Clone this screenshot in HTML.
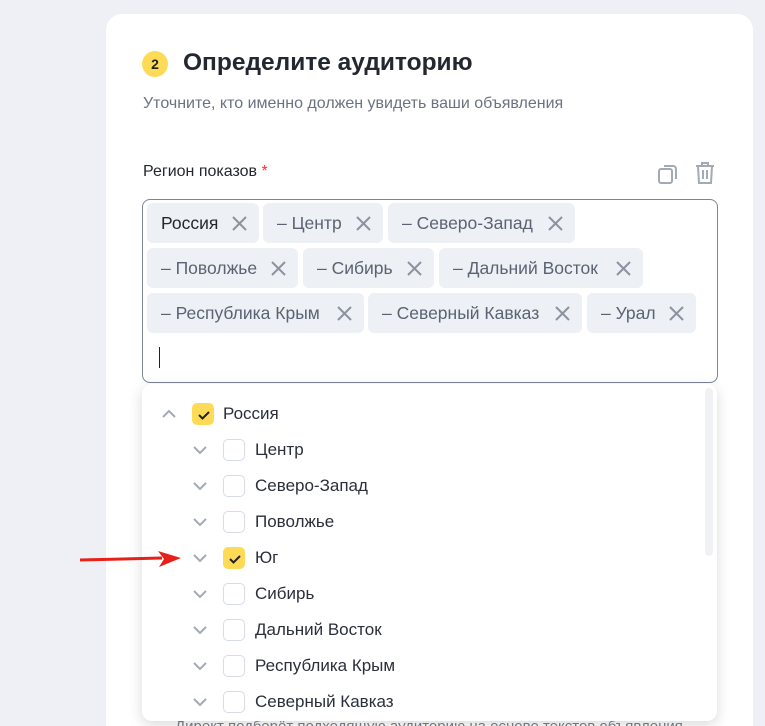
<!DOCTYPE html><html><head><meta charset="utf-8"><style>
html,body{margin:0;width:765px;height:726px;overflow:hidden}
body{background:#eef0f5;font-family:"Liberation Sans",sans-serif;position:relative}
.card{position:absolute;left:106px;top:14px;width:647px;height:740px;background:#fff;border-radius:16px}
.a{position:absolute;white-space:nowrap}
.chip{position:absolute;height:40px;background:#edf0f4;border-radius:6px;font-size:17.5px;color:#5b6373;line-height:40px;padding-left:14px;box-sizing:border-box}
.chip svg{position:absolute;right:12px;top:13px}
.box{position:absolute;left:142px;top:199px;width:576px;height:184px;border:1px solid #7c8596;border-radius:8px;box-sizing:border-box}
.dd{position:absolute;left:142px;top:384px;width:575px;height:337px;background:#fff;border-radius:10px;box-shadow:0 4px 14px rgba(0,0,0,.15);overflow:hidden}
.row{position:absolute;font-size:17px;color:#2a2f3a;height:36px;line-height:36px}
.cb{position:absolute;width:22px;height:22px;border:1px solid #d8dce3;border-radius:5px;box-sizing:border-box;top:7px}
.cb.on{background:#fddb56;border-color:#fddb56}
.cb svg{position:absolute;left:0;top:0}
</style></head><body>
<div class="card"></div>
<div class="a" style="left:142px;top:51px;width:26px;height:26px;border-radius:50%;background:#fddb56;font-size:14px;text-align:center;line-height:26px;color:#222;font-weight:bold">2</div>
<div class="a" style="left:183px;top:49px;font-size:24.5px;color:#23272f;font-weight:bold">Определите аудиторию</div>
<div class="a" style="left:143px;top:95px;font-size:16px;color:#6b7280">Уточните, кто именно должен увидеть ваши объявления</div>
<div class="a" style="left:143px;top:163px;font-size:16px;color:#23272f">Регион показов <span style="color:#f33">*</span></div>
<svg class="a" style="left:656px;top:162px" width="24" height="24" viewBox="0 0 24 24" fill="none" stroke="#a3aab5" stroke-width="2"><rect x="3" y="7" width="13" height="14" rx="2"/><path d="M8 4h9a3 3 0 0 1 3 3v10"/></svg>
<svg class="a" style="left:693px;top:160px" width="24" height="26" viewBox="0 0 24 26" fill="none" stroke="#a3aab5" stroke-width="2"><path d="M3 6h18M9 6V3h6v3M5 6l1 17h12l1-17M10 10v9M14 10v9"/></svg>
<div class="box"></div>
<div class="chip" style="left:147px;top:203px;width:112px;color:#23272f">Россия<svg width="15" height="15" viewBox="0 0 15 15" stroke="#8c93a0" stroke-width="2"><path d="M1 1l13 13M14 1L1 14"/></svg></div>
<div class="chip" style="left:263px;top:203px;width:120px">– Центр<svg width="15" height="15" viewBox="0 0 15 15" stroke="#8c93a0" stroke-width="2"><path d="M1 1l13 13M14 1L1 14"/></svg></div>
<div class="chip" style="left:388px;top:203px;width:187px">– Северо-Запад<svg width="15" height="15" viewBox="0 0 15 15" stroke="#8c93a0" stroke-width="2"><path d="M1 1l13 13M14 1L1 14"/></svg></div>
<div class="chip" style="left:147px;top:248px;width:151px">– Поволжье<svg width="15" height="15" viewBox="0 0 15 15" stroke="#8c93a0" stroke-width="2"><path d="M1 1l13 13M14 1L1 14"/></svg></div>
<div class="chip" style="left:303px;top:248px;width:131px">– Сибирь<svg width="15" height="15" viewBox="0 0 15 15" stroke="#8c93a0" stroke-width="2"><path d="M1 1l13 13M14 1L1 14"/></svg></div>
<div class="chip" style="left:439px;top:248px;width:204px">– Дальний Восток<svg width="15" height="15" viewBox="0 0 15 15" stroke="#8c93a0" stroke-width="2"><path d="M1 1l13 13M14 1L1 14"/></svg></div>
<div class="chip" style="left:147px;top:293px;width:217px">– Республика Крым<svg width="15" height="15" viewBox="0 0 15 15" stroke="#8c93a0" stroke-width="2"><path d="M1 1l13 13M14 1L1 14"/></svg></div>
<div class="chip" style="left:368px;top:293px;width:214px">– Северный Кавказ<svg width="15" height="15" viewBox="0 0 15 15" stroke="#8c93a0" stroke-width="2"><path d="M1 1l13 13M14 1L1 14"/></svg></div>
<div class="chip" style="left:587px;top:293px;width:109px">– Урал<svg width="15" height="15" viewBox="0 0 15 15" stroke="#8c93a0" stroke-width="2"><path d="M1 1l13 13M14 1L1 14"/></svg></div>
<div class="a" style="left:159px;top:347px;width:1px;height:21px;background:#222"></div>
<div class="a" style="left:175px;top:718px;font-size:15px;color:#7a808c">Директ подберёт подходящую аудиторию на основе текстов объявления</div>
<div class="dd">
<div class="a" style="left:563px;top:4px;width:8px;height:168px;background:#f0f1f4;border-radius:4px"></div>
<div class="row" style="left:0;top:12px;width:300px">
<svg class="a" style="left:19px;top:12px" width="16" height="10" viewBox="0 0 16 10" fill="none" stroke="#a3aab5" stroke-width="2"><path d="M2 9l6-6 6 6"/></svg>
<div class="cb on" style="left:50px"><svg width="22" height="22" viewBox="0 0 22 22" fill="none" stroke="#222" stroke-width="2"><path d="M6 11l3.5 3.5L16 8"/></svg></div>
<span class="a" style="left:81px">Россия</span></div>
<div class="row" style="left:0;top:48px;width:400px"><svg class="a" style="left:50px;top:13px" width="16" height="10" viewBox="0 0 16 10" fill="none" stroke="#a3aab5" stroke-width="2"><path d="M2 2l6 6 6-6"/></svg><div class="cb" style="left:81px"></div><span class="a" style="left:113px">Центр</span></div>
<div class="row" style="left:0;top:84px;width:400px"><svg class="a" style="left:50px;top:13px" width="16" height="10" viewBox="0 0 16 10" fill="none" stroke="#a3aab5" stroke-width="2"><path d="M2 2l6 6 6-6"/></svg><div class="cb" style="left:81px"></div><span class="a" style="left:113px">Северо-Запад</span></div>
<div class="row" style="left:0;top:120px;width:400px"><svg class="a" style="left:50px;top:13px" width="16" height="10" viewBox="0 0 16 10" fill="none" stroke="#a3aab5" stroke-width="2"><path d="M2 2l6 6 6-6"/></svg><div class="cb" style="left:81px"></div><span class="a" style="left:113px">Поволжье</span></div>
<div class="row" style="left:0;top:156px;width:400px"><svg class="a" style="left:50px;top:13px" width="16" height="10" viewBox="0 0 16 10" fill="none" stroke="#a3aab5" stroke-width="2"><path d="M2 2l6 6 6-6"/></svg><div class="cb on" style="left:81px"><svg width="22" height="22" viewBox="0 0 22 22" fill="none" stroke="#222" stroke-width="2"><path d="M6 11l3.5 3.5L16 8"/></svg></div><span class="a" style="left:113px">Юг</span></div>
<div class="row" style="left:0;top:192px;width:400px"><svg class="a" style="left:50px;top:13px" width="16" height="10" viewBox="0 0 16 10" fill="none" stroke="#a3aab5" stroke-width="2"><path d="M2 2l6 6 6-6"/></svg><div class="cb" style="left:81px"></div><span class="a" style="left:113px">Сибирь</span></div>
<div class="row" style="left:0;top:228px;width:400px"><svg class="a" style="left:50px;top:13px" width="16" height="10" viewBox="0 0 16 10" fill="none" stroke="#a3aab5" stroke-width="2"><path d="M2 2l6 6 6-6"/></svg><div class="cb" style="left:81px"></div><span class="a" style="left:113px">Дальний Восток</span></div>
<div class="row" style="left:0;top:264px;width:400px"><svg class="a" style="left:50px;top:13px" width="16" height="10" viewBox="0 0 16 10" fill="none" stroke="#a3aab5" stroke-width="2"><path d="M2 2l6 6 6-6"/></svg><div class="cb" style="left:81px"></div><span class="a" style="left:113px">Республика Крым</span></div>
<div class="row" style="left:0;top:300px;width:400px"><svg class="a" style="left:50px;top:13px" width="16" height="10" viewBox="0 0 16 10" fill="none" stroke="#a3aab5" stroke-width="2"><path d="M2 2l6 6 6-6"/></svg><div class="cb" style="left:81px"></div><span class="a" style="left:113px">Северный Кавказ</span></div>
</div>
<svg class="a" style="left:78px;top:550px" width="104" height="18" viewBox="0 0 104 18"><path d="M2 10L84 8" stroke="#e8201a" stroke-width="3"/><path d="M80 1L103 8 81 17 86 9z" fill="#e8201a"/></svg>
</body></html>
